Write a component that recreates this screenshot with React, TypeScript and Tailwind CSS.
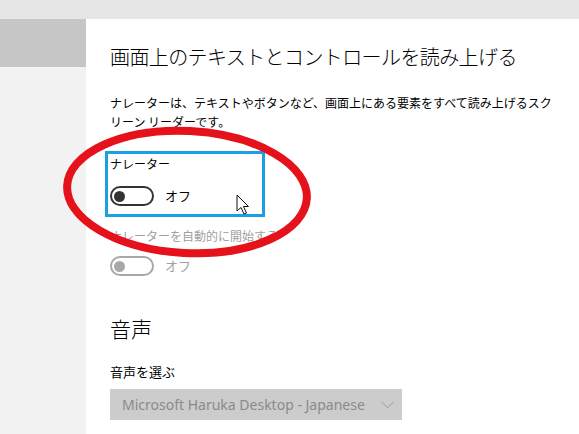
import React from 'react';

const jp = { fontFamily: '"Noto Sans CJK JP", "Noto Sans", sans-serif' };

const Toggle: React.FC<{ disabled?: boolean }> = ({ disabled }) => (
  <div className="flex items-center gap-[11px]">
    <div
      className={
        'w-[44px] h-[20px] rounded-full border-2 flex items-center pl-[2px] ' +
        (disabled ? 'border-[#a8a8a8]' : 'border-[#333333]')
      }
    >
      <div className={'w-[11px] h-[11px] rounded-full ' + (disabled ? 'bg-[#a8a8a8]' : 'bg-[#333333]')} />
    </div>
    <span className={'text-[13px] leading-[18px] ' + (disabled ? 'text-[#a0a0a0]' : 'text-black')}>オフ</span>
  </div>
);

export default function App() {
  return (
    <div className="relative w-[579px] h-[434px] overflow-hidden flex flex-col bg-white" style={jp}>
      <div className="h-[19px] bg-[#e6e6e6]" />
      <div className="flex flex-1">
        <aside className="w-[86px] bg-[#f2f2f2]">
          <div className="h-[48px] bg-[#c6c6c6]" />
        </aside>

        <main className="flex-1 bg-white pl-[24px] pt-[24px] flex flex-col items-start">
          <h1 className="text-[20px] leading-[28px] tracking-[-0.6px] text-black font-light">
            画面上のテキストとコントロールを読み上げる
          </h1>

          <p className="mt-[22px] text-[12px] leading-[19px] text-black whitespace-nowrap">
            ナレーターは、テキストやボタンなど、画面上にある要素をすべて読み上げるスク
            <br />
            リーン リーダーです。
          </p>

          <div className="mt-[20px] -ml-[5px] w-[160px] border-[3px] border-[#1ba1e2] px-[2px] pt-[2px] pb-[8px] flex flex-col">
            <span className="text-[12px] leading-[16px] text-black">ナレーター</span>
            <div className="mt-[14px]">
              <Toggle />
            </div>
          </div>

          <span className="mt-[11px] text-[12px] leading-[16px] text-[#a0a0a0]">ナレーターを自動的に開始する</span>
          <div className="mt-[12px]">
            <Toggle disabled />
          </div>

          <h2 className="mt-[38px] text-[21px] leading-[28px] text-black font-light">音声</h2>

          <span className="mt-[21px] text-[13px] leading-[18px] text-black">音声を選ぶ</span>

          <div className="mt-[8px] w-[292px] h-[31px] bg-[#cccccc] flex items-center justify-between pl-[12px] pr-[8px]">
            <span
              className="text-[14px] text-[#8a8a8a] whitespace-nowrap"
              style={{ fontFamily: '"Noto Sans", "Open Sans", sans-serif' }}
            >
              Microsoft Haruka Desktop - Japanese
            </span>
            <svg width="13" height="8" viewBox="0 0 13 8" fill="none">
              <path d="M0.5 0.8 L6.5 6.8 L12.5 0.8" stroke="#9a9a9a" strokeWidth="1" />
            </svg>
          </div>
        </main>
      </div>

      {/* annotation overlay: red ellipse + mouse pointer */}
      <svg className="absolute inset-0 pointer-events-none" width="579" height="434" viewBox="0 0 579 434">
        <ellipse
          cx="187"
          cy="192"
          rx="120"
          ry="61"
          transform="rotate(3 187 192)"
          fill="none"
          stroke="#e5121b"
          strokeWidth="8"
        />
        <path
          d="M237 195 L237 211 L241 207.5 L244 214 L246.5 213 L243.5 206.5 L248.5 206.5 Z"
          fill="#ffffff"
          stroke="#111111"
          strokeWidth="1"
          strokeLinejoin="round"
        />
      </svg>
    </div>
  );
}
